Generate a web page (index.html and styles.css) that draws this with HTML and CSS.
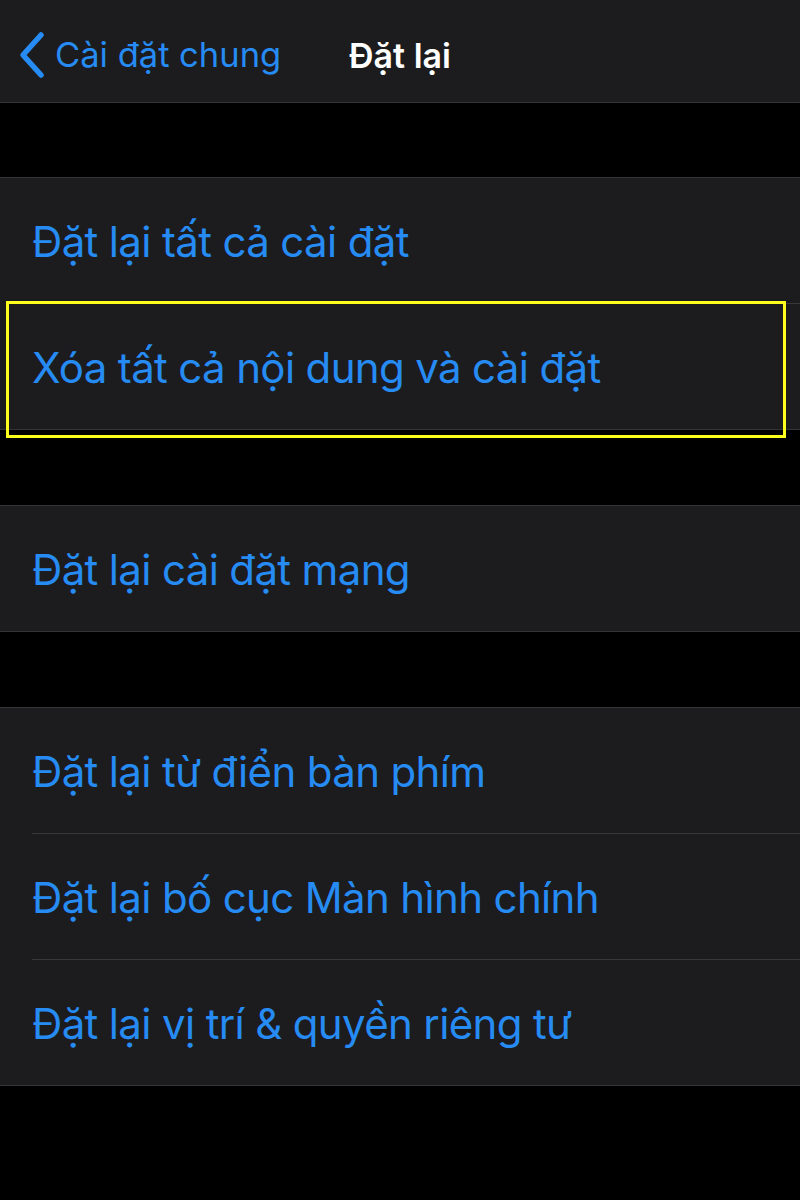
FILE: index.html
```html
<!DOCTYPE html>
<html lang="vi">
<head>
<meta charset="utf-8">
<title>Đặt lại</title>
<link rel="stylesheet" href="styles.css">
</head>
<body>
<header class="navbar">
  <div class="back">
    <svg class="chevron" width="30" height="48" viewBox="0 0 30 48" aria-hidden="true">
      <path d="M24 4 L6 24 L24 44" fill="none" stroke="#268bf2" stroke-width="5.5" stroke-linecap="round" stroke-linejoin="round"/>
    </svg>
    <span class="back-label">Cài đặt chung</span>
  </div>
  <div class="title">Đặt lại</div>
</header>

<main class="content">
  <section class="group">
    <div class="row"><span class="label">Đặt lại tất cả cài đặt</span></div>
    <div class="row highlighted"><span class="label">Xóa tất cả nội dung và cài đặt</span><span class="highlight-box"></span></div>
  </section>

  <section class="group">
    <div class="row"><span class="label">Đặt lại cài đặt mạng</span></div>
  </section>

  <section class="group">
    <div class="row"><span class="label">Đặt lại từ điển bàn phím</span></div>
    <div class="row"><span class="label">Đặt lại bố cục Màn hình chính</span></div>
    <div class="row"><span class="label">Đặt lại vị trí &amp; quyền riêng tư</span></div>
  </section>
</main>
</body>
</html>
```

FILE: styles.css
```css
html, body {
  margin: 0;
  padding: 0;
  background: #000;
}

body {
  width: 800px;
  height: 1200px;
  overflow: hidden;
  font-family: Inter, "Noto Sans", "DejaVu Sans", sans-serif;
  -webkit-font-smoothing: antialiased;
}

.navbar {
  position: relative;
  height: 102px;
  background: #1c1c1e;
  border-bottom: 1px solid #343436;
  display: flex;
  align-items: center;
}

.back {
  display: flex;
  align-items: center;
  gap: 8px;
  padding-left: 17px;
  margin-top: 7px;
}

.chevron {
  display: block;
}

.back-label {
  color: #268bf2;
  font-size: 34.5px;
  letter-spacing: 0;
}

.title {
  position: absolute;
  left: 349px;
  top: 0;
  height: 102px;
  display: flex;
  align-items: center;
  color: #fff;
  font-size: 34px;
  font-weight: 600;
  margin-top: 4px;
}

.content {
  display: flex;
  flex-direction: column;
  gap: 75px;
  padding-top: 74px;
}

.group {
  background: #1c1c1e;
  border-top: 1px solid #343436;
  border-bottom: 1px solid #343436;
}

.row {
  position: relative;
  height: 125px;
  display: flex;
  align-items: center;
  padding-left: 32px;
}

.row + .row::before {
  content: "";
  position: absolute;
  left: 32px;
  right: 0;
  top: -1px;
  height: 1px;
  background: #38383a;
}

.row + .row {
  margin-top: 1px;
}

.label {
  color: #268bf2;
  font-size: 42px;
  letter-spacing: -0.65px;
  line-height: 1;
  margin-top: 3px;
}

.highlight-box {
  position: absolute;
  left: 6px;
  top: -3px;
  width: 774px;
  height: 131px;
  border: 3px solid #ffff1e;
  pointer-events: none;
}
```
